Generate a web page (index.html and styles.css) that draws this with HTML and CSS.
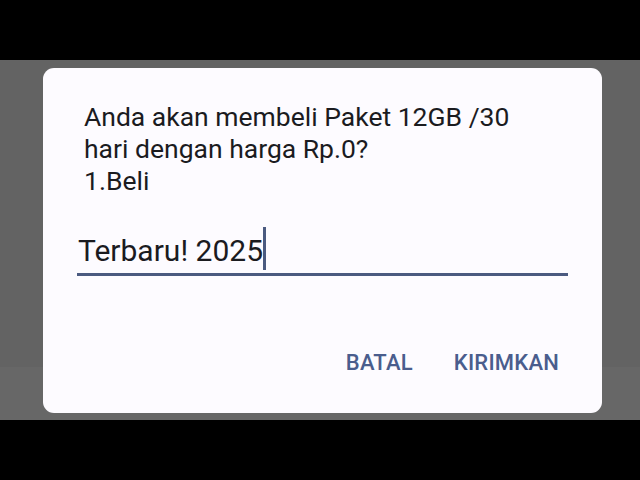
FILE: index.html
```html
<!DOCTYPE html>
<html>
<head>
<meta charset="utf-8">
<link rel="stylesheet" href="styles.css">
</head>
<body>
<div class="screen">
  <div class="bar"></div>
  <div class="backdrop">
    <div class="dialog">
      <div class="message">Anda akan membeli Paket 12GB /30<br>hari dengan harga Rp.0?<br>1.Beli</div>
      <div class="field">
        <span class="value">Terbaru! 2025</span><span class="cursor"></span>
      </div>
      <div class="actions">
        <span class="btn">BATAL</span>
        <span class="btn">KIRIMKAN</span>
      </div>
    </div>
  </div>
  <div class="bar"></div>
</div>
</body>
</html>
```
FILE: styles.css
```css
html, body {
  margin: 0;
  padding: 0;
  background: #000;
}
.screen {
  width: 640px;
  height: 480px;
  display: flex;
  flex-direction: column;
  font-family: Roboto, "Noto Sans", sans-serif;
}
.bar {
  height: 60px;
  background: #000;
  flex: none;
}
.backdrop {
  height: 360px;
  flex: none;
  background: linear-gradient(to bottom, #636363 0px, #636363 307px, #676767 307px, #676767 360px);
  padding: 8px 0 0 43px;
  box-sizing: border-box;
}
.dialog {
  width: 559px;
  height: 345px;
  box-sizing: border-box;
  background: #fdfbff;
  border-radius: 11px;
  padding: 33px 34px 0 34px;
  display: flex;
  flex-direction: column;
}
.message {
  font-size: 26.5px;
  line-height: 32px;
  color: #1b1b1f;
  padding-left: 7px;
}
.field {
  margin-top: 36px;
  height: 43px;
  box-sizing: border-box;
  border-bottom: 3px solid #4b5a80;
  display: flex;
  align-items: flex-start;
  padding-left: 1px;
}
.value {
  font-size: 30px;
  line-height: 36px;
  color: #1b1b1f;
}
.cursor {
  width: 3px;
  height: 43px;
  margin-top: -6px;
  background: #4b5a80;
}
.actions {
  margin-top: 74px;
  display: flex;
  justify-content: flex-end;
  gap: 41px;
  padding-right: 9px;
}
.btn {
  font-size: 22px;
  line-height: 26px;
  font-weight: 500;
  color: #4a5d8d;
  letter-spacing: 0.2px;
}
```
